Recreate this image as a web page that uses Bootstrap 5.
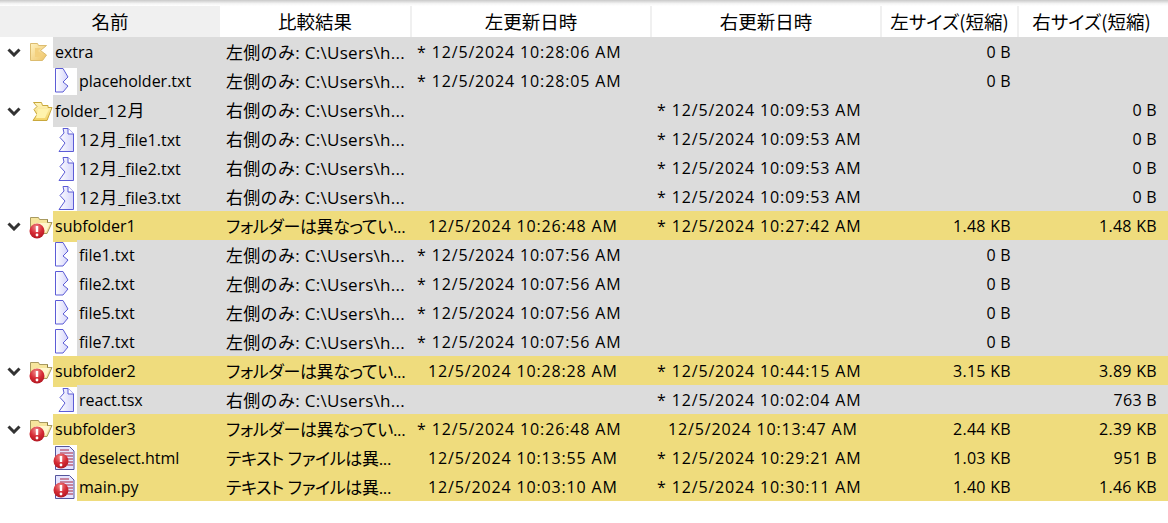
<!DOCTYPE html>
<html lang="ja">
<head>
  <meta charset="UTF-8">
  <link href="https://cdn.jsdelivr.net/npm/bootstrap@5.3.3/dist/css/bootstrap.min.css" rel="stylesheet">
  <style>
    body {
      font-family: "Open Sans", "Noto Sans CJK JP", sans-serif;
      font-size: 16px;
      color: #000;
      background: #fff;
      overflow: hidden;
    }
    .top-shade {
      height: 6px;
      background: linear-gradient(#c9c9c9, #f4f4f4 60%, #fff);
    }
    .cmp-row {
      display: grid;
      grid-template-columns: 220px 190px 240px 230px 137px 151px;
    }
    .cmp-head {
      height: 31px;
      font-family: "Noto Sans CJK JP", sans-serif;
      font-size: 18.5px;
      font-feature-settings: "palt";
      line-height: 31px;
    }
    .cmp-head > div { text-align: center; border-left: 2px solid #f0f0f0; }
    .cmp-head > div:first-child { background: #f0f0f0; border-left: 0; }
    .cmp-head > div:nth-child(2) { border-left: 0; }
    .cmp-head > div:last-child { padding-right: 4px; }
    .cmp-body .cmp-row { height: 29px; line-height: 31px; white-space: nowrap; }
    .only .cell { background: #dcdcdc; }
    .diff .cell { background: #efdc7d; }
    .cell { overflow: hidden; }
    .tree-gutter { flex: 0 0 53px; }
    .file-gutter { flex: 0 0 77px; }
    .tree-gutter svg, .file-gutter svg { display: block; overflow: visible; flex: none; }
    .chev-icon { margin-left: 7px; margin-right: 6px; }
    .file-gutter svg { margin-left: 53px; }
    .name-text { flex: 1; padding-left: 2px; }
    .jp-num { font-size: 17px; letter-spacing: .9px; }
    .res-text { padding-left: 6px; font-size: 17px; letter-spacing: .3px; }
    .res-kana { font-feature-settings: "palt"; letter-spacing: -.35px; }
    .date-cell { letter-spacing: .85px; }
    .date-star { padding-left: 7px; }
    .date-plain { padding-left: 18px; }
    .size-l { text-align: right; padding-right: 6px; letter-spacing: .3px; }
    .size-r { text-align: right; padding-right: 11px; letter-spacing: .3px; }
  </style>
</head>
<body>
<svg width="0" height="0" class="d-block">
  <defs>
    <linearGradient id="gold" x1="0" y1="0" x2="1" y2="1"><stop offset="0" stop-color="#fff2c0"/><stop offset="1" stop-color="#edc265"/></linearGradient>
    <linearGradient id="pale" x1="0" y1="0" x2="0" y2="1"><stop offset="0" stop-color="#fff6c0"/><stop offset="1" stop-color="#f3d264"/></linearGradient>
    <linearGradient id="lav" x1="0" y1="0" x2="1" y2="0"><stop offset="0" stop-color="#fff"/><stop offset="1" stop-color="#d4d4fb"/></linearGradient>
    <radialGradient id="ball" cx=".45" cy=".25" r=".85"><stop offset="0" stop-color="#f08a8c"/><stop offset=".5" stop-color="#d52a34"/><stop offset="1" stop-color="#a8141e"/></radialGradient>
    <symbol id="chev" viewBox="0 0 14 9"><path d="M1.500 1.500 7 7l5.500-5.500" fill="none" stroke="#333" stroke-width="3"/></symbol>
    <symbol id="folder-l" viewBox="0 0 26 29"><path d="M3.500 5.500h7l1 2h8l-6 5 6 4.500-4 5.500H3.500z" fill="url(#gold)" stroke="#dcbc70"/><path d="M8 10h6l-3 3 4 3-3 3H8z" fill="#f3d07e"/></symbol>
    <symbol id="folder-r" viewBox="0 0 26 29"><path d="M6.500 5.500h8l1 3h5.500v2h4l-5 13H6l4-6-3-5 3-3z" fill="url(#pale)" stroke="#c9a83c"/><path d="M11 12h11l-4 9H9z" fill="#fff3ad"/></symbol>
    <symbol id="folder-d" viewBox="0 0 26 29"><path d="M3.500 5.500h8l1 2h8v3h4.500l-5 11H3.500z" fill="#f6e59c" stroke="#a89a60"/><path d="M8 11h15l-4 9H8z" fill="#fff6cc"/><path d="M20.500 7.500v3" stroke="#8a7c40"/><circle cx="10" cy="19" r="7.500" fill="url(#ball)"/><path d="M10 14v6" stroke="#fff" stroke-width="2.400"/><circle cx="10" cy="23" r="1.400" fill="#fff"/></symbol>
    <symbol id="file-l" viewBox="0 0 24 29"><path d="M2.500 1.500H10L15 10l-5 5 5 4-5 6H2.500z" fill="url(#lav)" stroke="#5c5cd6"/></symbol>
    <symbol id="file-r" viewBox="0 0 24 29"><path d="M10 2.500h5l5.500 5.500v17.500H6l6-8.500-5-5.500 4-4.500z" fill="url(#lav)" stroke="#5c5cd6"/><path d="M15 2.500V8h5.500" fill="#fff" stroke="#5c5cd6"/></symbol>
    <symbol id="file-d" viewBox="0 0 24 29"><path d="M2.500 2.500h14l4.500 4.500v18.500H2.500z" fill="#e4e4ff" stroke="#55559c"/><path d="M7 6h9M7 9h13M9 12h11M14 15h6M14 18h6M14 21h6" stroke="#a8243e" stroke-width="1.200"/><circle cx="8" cy="17" r="7.500" fill="url(#ball)"/><path d="M8 12v6" stroke="#fff" stroke-width="2.400"/><circle cx="8" cy="21" r="1.400" fill="#fff"/></symbol>
  </defs>
</svg>
<div class="top-shade"></div>
<div class="cmp-row cmp-head">
  <div>名前</div><div>比較結果</div><div>左更新日時</div><div>右更新日時</div><div>左サイズ(短縮)</div><div>右サイズ(短縮)</div>
</div>
<div class="cmp-body" id="rows"></div>

<script>
  const L = '左側のみ: C:\\Users\\h...';
  const R = '右側のみ: C:\\Users\\h...';
  const F = 'フォルダーは異なってい...';
  const T = 'テキスト ファイルは異...';
  const M = '<span class="jp-num">12月</span>';
  // kind, icon, name, result, left date, right date, left size, right size
  const data = [
    ['only', 'folder-l', 'extra', L, '* 12/5/2024 10:28:06 AM', '', '0 B', ''],
    ['only', 'file-l', 'placeholder.txt', L, '* 12/5/2024 10:28:05 AM', '', '0 B', ''],
    ['only', 'folder-r', 'folder_' + M, R, '', '* 12/5/2024 10:09:53 AM', '', '0 B'],
    ['only', 'file-r', M + '_file1.txt', R, '', '* 12/5/2024 10:09:53 AM', '', '0 B'],
    ['only', 'file-r', M + '_file2.txt', R, '', '* 12/5/2024 10:09:53 AM', '', '0 B'],
    ['only', 'file-r', M + '_file3.txt', R, '', '* 12/5/2024 10:09:53 AM', '', '0 B'],
    ['diff', 'folder-d', 'subfolder1', F, '12/5/2024 10:26:48 AM', '* 12/5/2024 10:27:42 AM', '1.48 KB', '1.48 KB'],
    ['only', 'file-l', 'file1.txt', L, '* 12/5/2024 10:07:56 AM', '', '0 B', ''],
    ['only', 'file-l', 'file2.txt', L, '* 12/5/2024 10:07:56 AM', '', '0 B', ''],
    ['only', 'file-l', 'file5.txt', L, '* 12/5/2024 10:07:56 AM', '', '0 B', ''],
    ['only', 'file-l', 'file7.txt', L, '* 12/5/2024 10:07:56 AM', '', '0 B', ''],
    ['diff', 'folder-d', 'subfolder2', F, '12/5/2024 10:28:28 AM', '* 12/5/2024 10:44:15 AM', '3.15 KB', '3.89 KB'],
    ['only', 'file-r', 'react.tsx', R, '', '* 12/5/2024 10:02:04 AM', '', '763 B'],
    ['diff', 'folder-d', 'subfolder3', F, '* 12/5/2024 10:26:48 AM', '12/5/2024 10:13:47 AM', '2.44 KB', '2.39 KB'],
    ['diff', 'file-d', 'deselect.html', T, '12/5/2024 10:13:55 AM', '* 12/5/2024 10:29:21 AM', '1.03 KB', '951 B'],
    ['diff', 'file-d', 'main.py', T, '12/5/2024 10:03:10 AM', '* 12/5/2024 10:30:11 AM', '1.40 KB', '1.46 KB']
  ];

  const dateClass = d => d.startsWith('*') ? 'date-cell date-star' : 'date-cell date-plain';
  const icon = (id, w, h, cls) => `<svg width="${w}" height="${h}" class="${cls}"><use href="#${id}"/></svg>`;

  document.getElementById('rows').innerHTML = data.map(r => {
    const gutter = r[1].startsWith('folder')
      ? `<div class="tree-gutter d-flex align-items-center">${icon('chev', 14, 9, 'chev-icon')}${icon(r[1], 26, 29, '')}</div>`
      : `<div class="file-gutter d-flex align-items-center">${icon(r[1], 24, 29, '')}</div>`;
    const kana = r[0] === 'diff' ? ' res-kana' : '';
    return `<div class="cmp-row ${r[0]}">
      <div class="d-flex">${gutter}<div class="cell name-text">${r[2]}</div></div>
      <div class="cell res-text${kana}">${r[3]}</div>
      <div class="cell ${dateClass(r[4])}">${r[4]}</div>
      <div class="cell ${dateClass(r[5])}">${r[5]}</div>
      <div class="cell size-l">${r[6]}</div>
      <div class="cell size-r">${r[7]}</div>
    </div>`;
  }).join('');
</script>
<script src="https://cdn.jsdelivr.net/npm/bootstrap@5.3.3/dist/js/bootstrap.bundle.min.js"></script>
</body>
</html>
